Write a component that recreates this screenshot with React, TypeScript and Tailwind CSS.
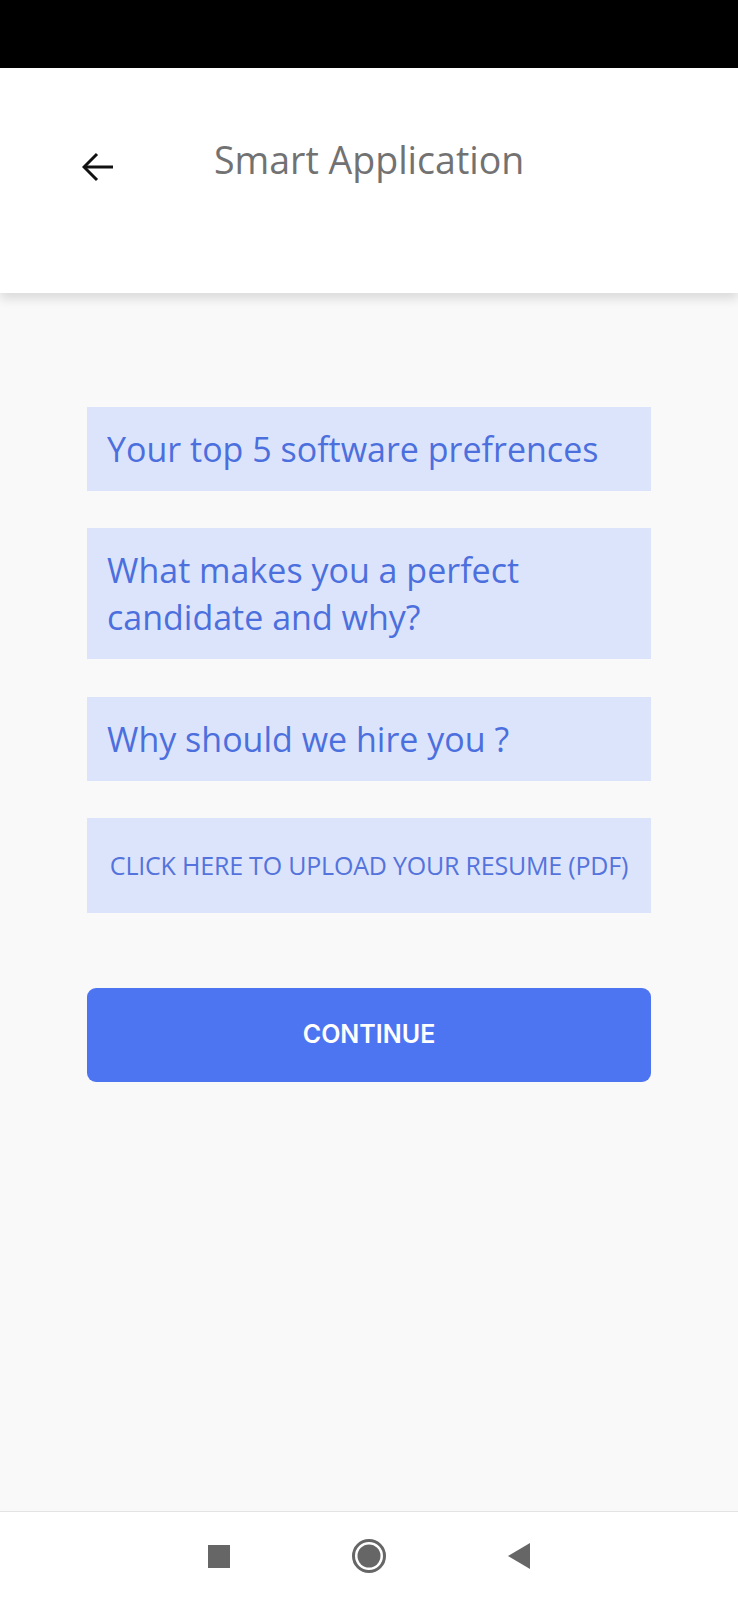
const fieldText = "text-[34px] leading-[47px] text-[#4c6fde]"

function BackArrow() {
  return (
    <svg width="32" height="30" viewBox="0 0 32 30" fill="none" stroke="#111" strokeWidth="3">
      <line x1="3" y1="15" x2="31" y2="15" />
      <polyline points="15,2 2,15 15,28" strokeLinejoin="miter" />
    </svg>
  )
}

function NavBar() {
  return (
    <div className="h-[89px] bg-white border-t border-[#e3e3e3] flex items-center justify-center">
      <div className="w-[150px] flex justify-center">
        <div className="w-[22px] h-[23px] bg-[#666]" />
      </div>
      <div className="w-[150px] flex justify-center">
        <svg width="36" height="36" viewBox="0 0 36 36">
          <circle cx="18" cy="18" r="15.5" fill="none" stroke="#666" strokeWidth="3" />
          <circle cx="18" cy="18" r="11.5" fill="#666" />
        </svg>
      </div>
      <div className="w-[150px] flex justify-center">
        <svg width="22" height="26" viewBox="0 0 22 26">
          <polygon points="22,0 22,26 0,13" fill="#666" />
        </svg>
      </div>
    </div>
  )
}

export default function App() {
  return (
    <div className="w-[738px] h-[1600px] flex flex-col bg-[#f9f9f9]" style={{ fontFamily: '"Open Sans", "Noto Sans", sans-serif' }}>
      <div className="h-[68px] bg-black" />
      <header className="relative z-10 h-[225px] bg-white shadow-[0_6px_10px_rgba(0,0,0,0.12)] flex items-start pt-[84px]">
        <div className="w-[82px]" />
        <BackArrow />
        <h1 className="ml-[100px] -mt-[17px] text-[37.5px] leading-[50px] text-[#727272]">Smart Application</h1>
      </header>

      <main className="flex-1 px-[87px] pt-[114px] flex flex-col">
        <div className="bg-[#dce4fb] px-[20px] pt-[19px] pb-[18px]">
          <p className={fieldText}>Your top 5 software prefrences</p>
        </div>
        <div className="mt-[37px] bg-[#dce4fb] px-[20px] pt-[19px] pb-[18px]">
          <p className={fieldText}>What makes you a perfect candidate and why?</p>
        </div>
        <div className="mt-[38px] bg-[#dce4fb] px-[20px] pt-[19px] pb-[18px]">
          <p className={fieldText}>Why should we hire you ?</p>
        </div>
        <div className="mt-[37px] h-[95px] bg-[#dce4fb] flex items-center justify-center">
          <p className="text-[25px] text-[#5473dc] tracking-[-0.2px]">CLICK HERE TO UPLOAD YOUR RESUME (PDF)</p>
        </div>
        <button
          className="mt-[75px] h-[94px] rounded-[9px] bg-[#4e75f1] text-white text-[25px] font-semibold flex items-center justify-center"
          style={{ fontFamily: 'Inter, "Liberation Sans", sans-serif' }}
        >
          CONTINUE
        </button>
      </main>

      <NavBar />
    </div>
  )
}
